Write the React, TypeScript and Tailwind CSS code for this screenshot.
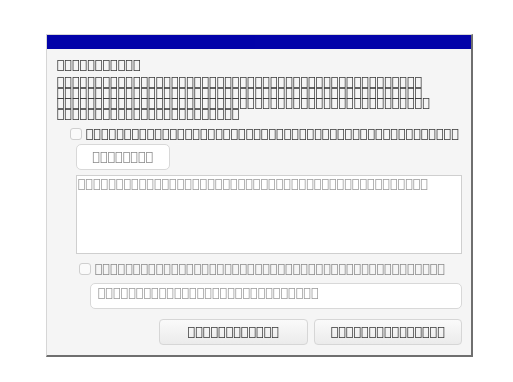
const font = { fontFamily: '"DejaVu Sans", sans-serif' };

const Checkbox = () => (
  <span className="inline-block w-[12px] h-[12px] shrink-0 rounded-[3px] border border-[#cfcfcf] bg-[#fafafa]" />
);

export default function App() {
  return (
    <div className="w-[513px] h-[382px] bg-white pl-[46px] pt-[34px] opacity-[0.99] will-change-transform" style={font}>
      <div className="w-[427px] h-[323px] bg-[#f5f5f5] border-l border-t border-[#d6d6d6] border-r-2 border-b-2 border-r-[#6e6e6e] border-b-[#6e6e6e] flex flex-col">
        <div className="h-[14px] bg-[#0000a8] shrink-0" />
        <div className="flex flex-col pl-[10px] pr-[9px] text-[12.7px] text-[#333]">
          <div className="mt-[11px] leading-[10px]">{"\uE000".repeat(11)}</div>
          <p className="mt-[7px] leading-[10.5px]">
            {"\uE000".repeat(48)}
            <br />
            {"\uE000".repeat(48)}
            <br />
            {"\uE000".repeat(49)}
            <br />
            {"\uE000".repeat(24)}
          </p>
          <label className="mt-[9px] ml-[13px] flex items-center gap-[4px] leading-[12px]">
            <Checkbox />
            <span>{"\uE000".repeat(49)}</span>
          </label>
          <button className="mt-[4px] ml-[19px] w-[94px] h-[26px] rounded-[5px] border border-[#d8d8d8] bg-white text-[#888] leading-[12px]">
            {"\uE000".repeat(8)}
          </button>
          <div className="mt-[5px] ml-[19px] h-[79px] border border-[#cfcfcf] bg-white text-[#999] px-[1px] pt-[2px] leading-[12px]">
            {"\uE000".repeat(46)}
          </div>
          <label className="mt-[9px] ml-[22px] flex items-center gap-[4px] leading-[12px] text-[#888]">
            <Checkbox />
            <span>{"\uE000".repeat(46)}</span>
          </label>
          <div className="mt-[8px] ml-[33px] h-[26px] rounded-[5px] border border-[#d8d8d8] bg-white text-[#999] px-[7px] pt-[3px] leading-[12px]">
            {"\uE000".repeat(29)}
          </div>
          <div className="mt-[10px] flex justify-end gap-[6px]">
            <button className="w-[149px] h-[26px] rounded-[4px] border border-[#d6d6d6] bg-gradient-to-b from-[#fafafa] to-[#ebebeb] text-[#333] leading-[12px]">
              {"\uE000".repeat(12)}
            </button>
            <button className="w-[148px] h-[26px] rounded-[4px] border border-[#d6d6d6] bg-gradient-to-b from-[#fafafa] to-[#ebebeb] text-[#333] leading-[12px]">
              {"\uE000".repeat(15)}
            </button>
          </div>
        </div>
      </div>
    </div>
  );
}
